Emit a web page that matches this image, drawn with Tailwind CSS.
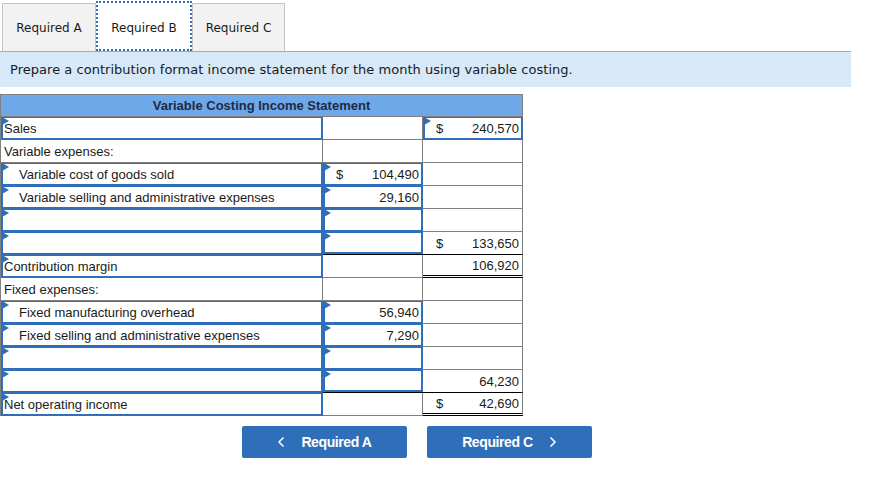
<!DOCTYPE html>
<html lang="en">
    <head>
        <meta charset="UTF-8" />
        <script src="https://cdn.jsdelivr.net/npm/@tailwindcss/browser@4"></script>
        <title>Variable Costing</title>
    </head>
    <body class="bg-white w-[877px] h-[494px] overflow-hidden text-[#1a1a1a] font-['Liberation_Sans',Arial,sans-serif]">
        <!-- Tabs -->
        <div class="flex items-end h-[51px] pl-[2px] font-['DejaVu_Sans',Verdana,sans-serif] text-[12px]">
            <div class="w-[94px] h-[48px] bg-[#f2f2f2] border border-b-0 border-[#c4c4c4] flex items-center justify-center">Required A</div>
            <div class="w-[96px] h-[50px] pt-[3px] bg-white border-[2px] border-dotted border-[#2f6fba] flex items-center justify-center">Required B</div>
            <div class="w-[93px] h-[48px] bg-[#f2f2f2] border border-b-0 border-[#c4c4c4] flex items-center justify-center">Required C</div>
        </div>

        <!-- Instruction -->
        <div class="w-[851px] h-[36px] bg-[#d7e9f8] border-t border-[#a8a8a8] pl-[10px] flex items-center font-['DejaVu_Sans',Verdana,sans-serif] text-[13px] tracking-[0.03px]">
            Prepare a contribution format income statement for the month using variable costing.
        </div>

        <!-- Statement -->
        <div class="mt-[7px] w-[523px] border-l border-t border-[#808080] text-[13px]">
            <div class="h-[22px] bg-[#6fa8e8] border-r border-b border-[#808080] flex items-center justify-center font-bold text-[#1f2a44]">
                Variable Costing Income Statement
            </div>
            <div class="grid grid-cols-[322px_100px_100px] auto-rows-[23px]">
                <!-- Sales -->
                <div class="relative flex items-center pt-[2px] pl-[1px] border-x-2 border-t border-b-2 border-[#2f6fba]"><svg class="absolute -left-[1px] -top-[1px] w-[7px] h-[8px]" viewBox="0 0 7 8"><polygon points="0,0 7,4 0,8" fill="#2f6fba" /></svg>Sales</div>
                <div class="border-r border-b border-[#808080]"></div>
                <div class="relative flex items-center justify-between pt-[2px] pl-[11px] pr-[2px] border-x-2 border-t border-b-2 border-[#2f6fba]"><svg class="absolute -left-[1px] -top-[1px] w-[7px] h-[8px]" viewBox="0 0 7 8"><polygon points="0,0 7,4 0,8" fill="#2f6fba" /></svg><span>$</span><span>240,570</span></div>

                <!-- Variable expenses -->
                <div class="flex items-center pt-[2px] pl-[3px] border-r border-b border-[#808080]">Variable expenses:</div>
                <div class="border-r border-b border-[#808080]"></div>
                <div class="border-r border-b border-[#808080]"></div>

                <!-- Variable cost of goods sold -->
                <div class="relative flex items-center pt-[2px] pl-[16px] border-x-2 border-t border-b-2 border-[#2f6fba]"><svg class="absolute -left-[1px] -top-[1px] w-[7px] h-[8px]" viewBox="0 0 7 8"><polygon points="0,0 7,4 0,8" fill="#2f6fba" /></svg>Variable cost of goods sold</div>
                <div class="relative flex items-center justify-between pt-[2px] pl-[11px] pr-[2px] border-x-2 border-t border-b-2 border-[#2f6fba]"><svg class="absolute -left-[1px] -top-[1px] w-[7px] h-[8px]" viewBox="0 0 7 8"><polygon points="0,0 7,4 0,8" fill="#2f6fba" /></svg><span>$</span><span>104,490</span></div>
                <div class="border-r border-b border-[#808080]"></div>

                <!-- Variable selling -->
                <div class="relative flex items-center pt-[2px] pl-[16px] border-x-2 border-t border-b-2 border-[#2f6fba]"><svg class="absolute -left-[1px] -top-[1px] w-[7px] h-[8px]" viewBox="0 0 7 8"><polygon points="0,0 7,4 0,8" fill="#2f6fba" /></svg>Variable selling and administrative expenses</div>
                <div class="relative flex items-center justify-end pt-[2px] pr-[2px] border-x-2 border-t border-b-2 border-[#2f6fba]"><svg class="absolute -left-[1px] -top-[1px] w-[7px] h-[8px]" viewBox="0 0 7 8"><polygon points="0,0 7,4 0,8" fill="#2f6fba" /></svg>29,160</div>
                <div class="border-r border-b border-[#808080]"></div>

                <!-- Empty -->
                <div class="relative border-x-2 border-t border-b-2 border-[#2f6fba]"><svg class="absolute -left-[1px] -top-[1px] w-[7px] h-[8px]" viewBox="0 0 7 8"><polygon points="0,0 7,4 0,8" fill="#2f6fba" /></svg></div>
                <div class="relative border-x-2 border-t border-b-2 border-[#2f6fba]"><svg class="absolute -left-[1px] -top-[1px] w-[7px] h-[8px]" viewBox="0 0 7 8"><polygon points="0,0 7,4 0,8" fill="#2f6fba" /></svg></div>
                <div class="border-r border-b border-[#808080]"></div>

                <!-- Total variable -->
                <div class="relative border-x-2 border-t border-b-2 border-[#2f6fba]"><svg class="absolute -left-[1px] -top-[1px] w-[7px] h-[8px]" viewBox="0 0 7 8"><polygon points="0,0 7,4 0,8" fill="#2f6fba" /></svg></div>
                <div class="border-b border-black"><div class="relative h-full border-x-2 border-t border-b-2 border-[#2f6fba]"><svg class="absolute -left-[1px] -top-[1px] w-[7px] h-[8px]" viewBox="0 0 7 8"><polygon points="0,0 7,4 0,8" fill="#2f6fba" /></svg></div></div>
                <div class="flex items-center justify-between pt-[2px] pl-[13px] pr-[3px] border-r border-b border-r-[#808080] border-b-black"><span>$</span><span>133,650</span></div>

                <!-- Contribution margin -->
                <div class="relative flex items-center pt-[2px] pl-[1px] border-x-2 border-t border-b-2 border-[#2f6fba]"><svg class="absolute -left-[1px] -top-[1px] w-[7px] h-[8px]" viewBox="0 0 7 8"><polygon points="0,0 7,4 0,8" fill="#2f6fba" /></svg>Contribution margin</div>
                <div class="border-r border-b border-[#808080]"></div>
                <div class="flex items-center justify-end pt-[2px] pr-[3px] border-r border-b-[3px] border-double border-r-[#808080] border-b-black">106,920</div>

                <!-- Fixed expenses -->
                <div class="flex items-center pt-[2px] pl-[3px] border-r border-b border-[#808080]">Fixed expenses:</div>
                <div class="border-r border-b border-[#808080]"></div>
                <div class="border-r border-b border-[#808080]"></div>

                <!-- Fixed manufacturing -->
                <div class="relative flex items-center pt-[2px] pl-[16px] border-x-2 border-t border-b-2 border-[#2f6fba]"><svg class="absolute -left-[1px] -top-[1px] w-[7px] h-[8px]" viewBox="0 0 7 8"><polygon points="0,0 7,4 0,8" fill="#2f6fba" /></svg>Fixed manufacturing overhead</div>
                <div class="relative flex items-center justify-end pt-[2px] pr-[2px] border-x-2 border-t border-b-2 border-[#2f6fba]"><svg class="absolute -left-[1px] -top-[1px] w-[7px] h-[8px]" viewBox="0 0 7 8"><polygon points="0,0 7,4 0,8" fill="#2f6fba" /></svg>56,940</div>
                <div class="border-r border-b border-[#808080]"></div>

                <!-- Fixed selling -->
                <div class="relative flex items-center pt-[2px] pl-[16px] border-x-2 border-t border-b-2 border-[#2f6fba]"><svg class="absolute -left-[1px] -top-[1px] w-[7px] h-[8px]" viewBox="0 0 7 8"><polygon points="0,0 7,4 0,8" fill="#2f6fba" /></svg>Fixed selling and administrative expenses</div>
                <div class="relative flex items-center justify-end pt-[2px] pr-[2px] border-x-2 border-t border-b-2 border-[#2f6fba]"><svg class="absolute -left-[1px] -top-[1px] w-[7px] h-[8px]" viewBox="0 0 7 8"><polygon points="0,0 7,4 0,8" fill="#2f6fba" /></svg>7,290</div>
                <div class="border-r border-b border-[#808080]"></div>

                <!-- Empty -->
                <div class="relative border-x-2 border-t border-b-2 border-[#2f6fba]"><svg class="absolute -left-[1px] -top-[1px] w-[7px] h-[8px]" viewBox="0 0 7 8"><polygon points="0,0 7,4 0,8" fill="#2f6fba" /></svg></div>
                <div class="relative border-x-2 border-t border-b-2 border-[#2f6fba]"><svg class="absolute -left-[1px] -top-[1px] w-[7px] h-[8px]" viewBox="0 0 7 8"><polygon points="0,0 7,4 0,8" fill="#2f6fba" /></svg></div>
                <div class="border-r border-b border-[#808080]"></div>

                <!-- Total fixed -->
                <div class="relative border-x-2 border-t border-b-2 border-[#2f6fba]"><svg class="absolute -left-[1px] -top-[1px] w-[7px] h-[8px]" viewBox="0 0 7 8"><polygon points="0,0 7,4 0,8" fill="#2f6fba" /></svg></div>
                <div class="border-b border-black"><div class="relative h-full border-x-2 border-t border-b-2 border-[#2f6fba]"><svg class="absolute -left-[1px] -top-[1px] w-[7px] h-[8px]" viewBox="0 0 7 8"><polygon points="0,0 7,4 0,8" fill="#2f6fba" /></svg></div></div>
                <div class="flex items-center justify-end pt-[2px] pr-[3px] border-r border-b border-r-[#808080] border-b-black">64,230</div>

                <!-- Net operating income -->
                <div class="relative flex items-center pt-[2px] pl-[1px] border-x-2 border-t border-b-2 border-[#2f6fba]"><svg class="absolute -left-[1px] -top-[1px] w-[7px] h-[8px]" viewBox="0 0 7 8"><polygon points="0,0 7,4 0,8" fill="#2f6fba" /></svg>Net operating income</div>
                <div class="border-r border-b border-[#808080]"></div>
                <div class="flex items-center justify-between pt-[2px] pl-[13px] pr-[3px] border-r border-b-[3px] border-double border-r-[#808080] border-b-black"><span>$</span><span>42,690</span></div>
            </div>
        </div>

        <!-- Prev / next -->
        <div class="mt-[10px] ml-[242px] flex gap-[20px] text-white font-bold text-[14px] tracking-[-0.4px]">
            <div class="w-[165px] h-[32px] bg-[#2f6fba] rounded-[2px] flex items-center justify-center gap-[16px]">
                <svg class="w-[8px] h-[12px]" viewBox="0 0 8 12" fill="none" stroke="white" stroke-width="1.5"><path d="M6.5 1.5 L2 6 L6.5 10.5" /></svg>
                <span>Required A</span>
            </div>
            <div class="w-[165px] h-[32px] bg-[#2f6fba] rounded-[2px] flex items-center justify-center gap-[16px]">
                <span>Required C</span>
                <svg class="w-[8px] h-[12px]" viewBox="0 0 8 12" fill="none" stroke="white" stroke-width="1.5"><path d="M1.5 1.5 L6 6 L1.5 10.5" /></svg>
            </div>
        </div>
    </body>
</html>
